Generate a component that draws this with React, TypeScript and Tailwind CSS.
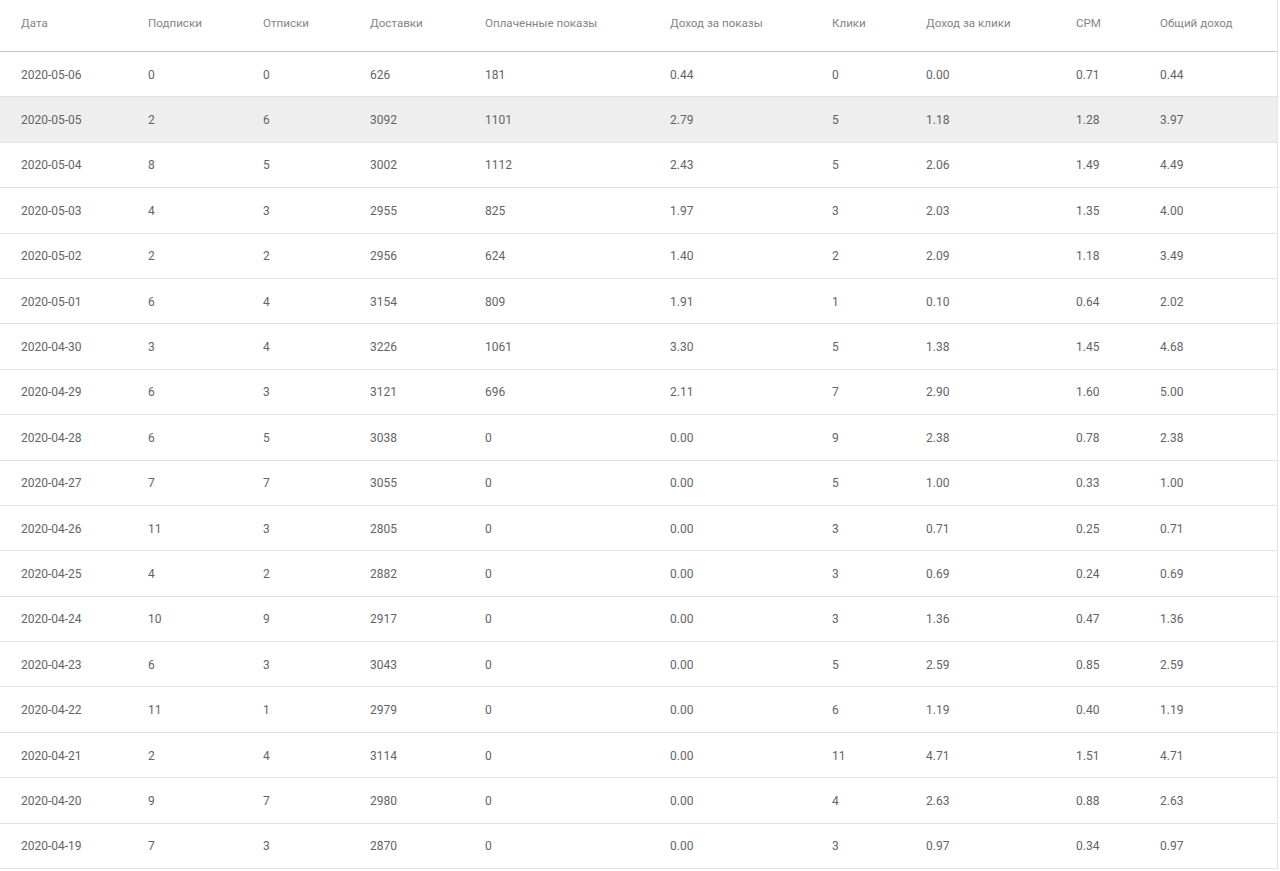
import React from "react";

const headers = [
  "Дата",
  "Подписки",
  "Отписки",
  "Доставки",
  "Оплаченные показы",
  "Доход за показы",
  "Клики",
  "Доход за клики",
  "CPM",
  "Общий доход",
];

const rows: string[][] = [
  ["2020-05-06", "0", "0", "626", "181", "0.44", "0", "0.00", "0.71", "0.44"],
  ["2020-05-05", "2", "6", "3092", "1101", "2.79", "5", "1.18", "1.28", "3.97"],
  ["2020-05-04", "8", "5", "3002", "1112", "2.43", "5", "2.06", "1.49", "4.49"],
  ["2020-05-03", "4", "3", "2955", "825", "1.97", "3", "2.03", "1.35", "4.00"],
  ["2020-05-02", "2", "2", "2956", "624", "1.40", "2", "2.09", "1.18", "3.49"],
  ["2020-05-01", "6", "4", "3154", "809", "1.91", "1", "0.10", "0.64", "2.02"],
  ["2020-04-30", "3", "4", "3226", "1061", "3.30", "5", "1.38", "1.45", "4.68"],
  ["2020-04-29", "6", "3", "3121", "696", "2.11", "7", "2.90", "1.60", "5.00"],
  ["2020-04-28", "6", "5", "3038", "0", "0.00", "9", "2.38", "0.78", "2.38"],
  ["2020-04-27", "7", "7", "3055", "0", "0.00", "5", "1.00", "0.33", "1.00"],
  ["2020-04-26", "11", "3", "2805", "0", "0.00", "3", "0.71", "0.25", "0.71"],
  ["2020-04-25", "4", "2", "2882", "0", "0.00", "3", "0.69", "0.24", "0.69"],
  ["2020-04-24", "10", "9", "2917", "0", "0.00", "3", "1.36", "0.47", "1.36"],
  ["2020-04-23", "6", "3", "3043", "0", "0.00", "5", "2.59", "0.85", "2.59"],
  ["2020-04-22", "11", "1", "2979", "0", "0.00", "6", "1.19", "0.40", "1.19"],
  ["2020-04-21", "2", "4", "3114", "0", "0.00", "11", "4.71", "1.51", "4.71"],
  ["2020-04-20", "9", "7", "2980", "0", "0.00", "4", "2.63", "0.88", "2.63"],
  ["2020-04-19", "7", "3", "2870", "0", "0.00", "3", "0.97", "0.34", "0.97"],
];

const grid =
  "grid grid-cols-[148px_115px_107px_115px_185px_162px_94px_150px_84px_1fr] items-center";

export default function App() {
  return (
    <div
      className="w-[1280px] h-[871px] bg-white overflow-hidden"
      style={{ fontFamily: "Roboto, 'Liberation Sans', sans-serif" }}
    >
      <div className="w-[1278px] border-r border-[#e3e3e3]">
        <div
          className={`${grid} h-[52px] border-b border-[#c9c9c9] text-[11.6px] text-[#858585]`}
        >
          {headers.map((h, i) => (
            <div key={h} className={i === 0 ? "pl-[21px] pb-[3px]" : "pb-[3px]"}>
              {h}
            </div>
          ))}
        </div>
        {rows.map((r, ri) => (
          <div
            key={r[0]}
            className={`${grid} h-[45.4px] border-b border-[#e3e3e3] text-[12px] text-[#646464] ${
              ri === 1 ? "bg-[#eeeeee]" : "bg-white"
            }`}
          >
            {r.map((c, i) => (
              <div key={i} className={i === 0 ? "pl-[21px] pt-[1px]" : "pt-[1px]"}>
                {c}
              </div>
            ))}
          </div>
        ))}
      </div>
    </div>
  );
}
